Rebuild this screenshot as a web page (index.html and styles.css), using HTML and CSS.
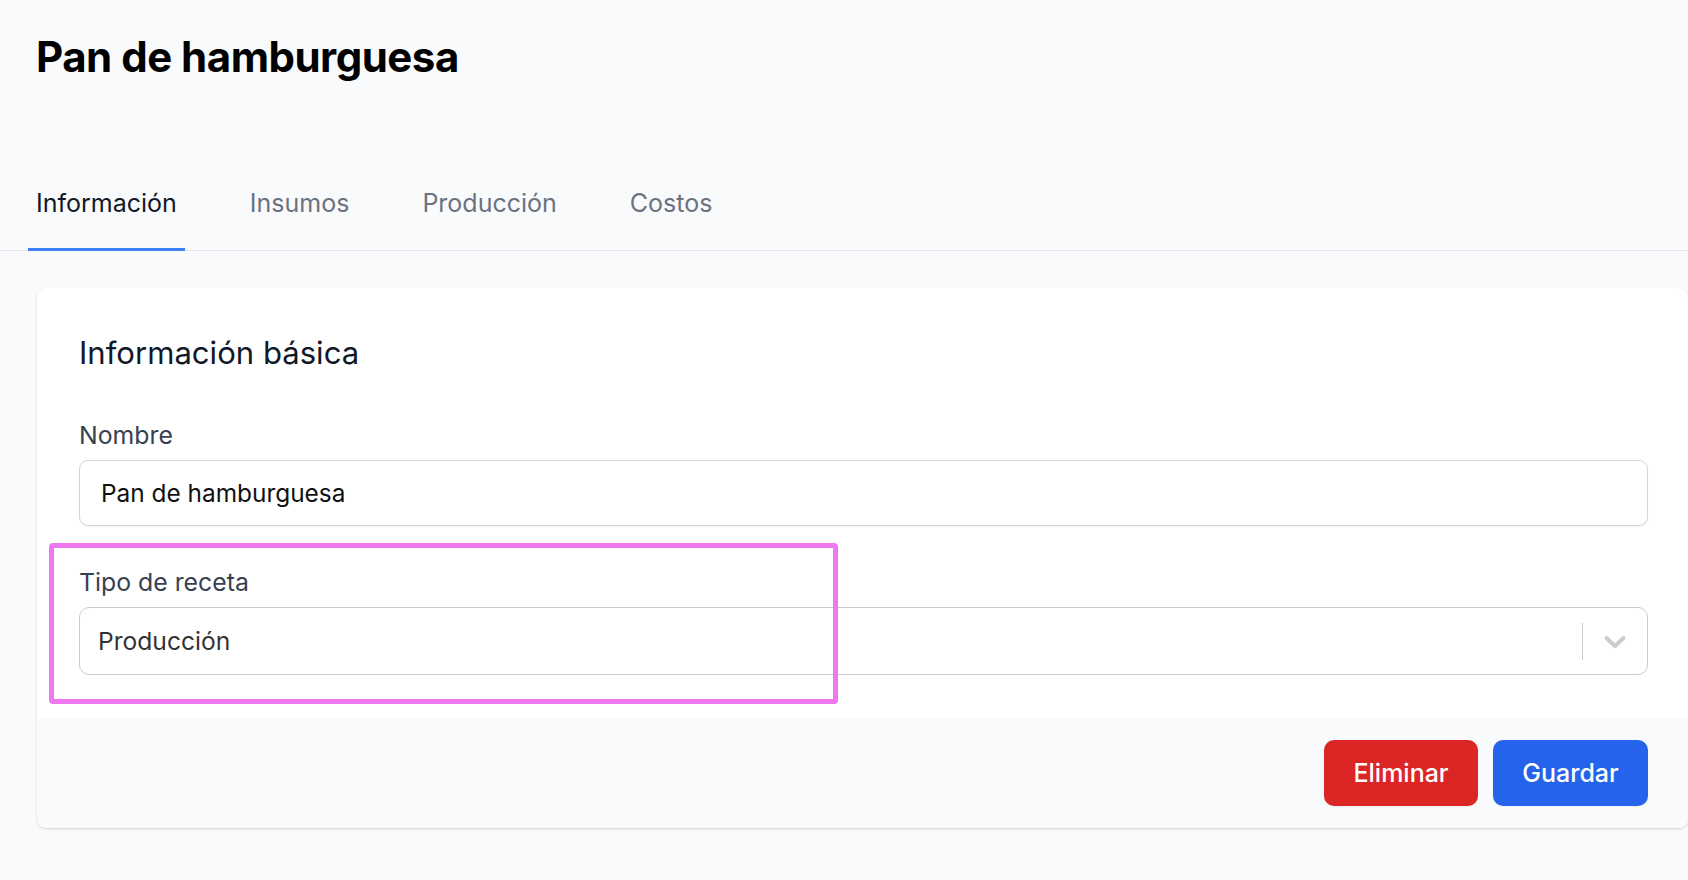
FILE: index.html
```html
<!DOCTYPE html>
<html lang="es">
<head>
<meta charset="utf-8">
<title>Pan de hamburguesa</title>
<link rel="stylesheet" href="styles.css">
</head>
<body>
  <h1 class="page-title">Pan de hamburguesa</h1>
  <nav class="tabs">
    <a class="tab tab-active">Información</a>
    <a class="tab">Insumos</a>
    <a class="tab">Producción</a>
    <a class="tab">Costos</a>
  </nav>
  <section class="card">
    <div class="card-body">
      <h2 class="card-title">Información básica</h2>
      <div class="field field-name">
        <label class="label">Nombre</label>
        <div class="text-input">Pan de hamburguesa</div>
      </div>
      <div class="field field-type">
        <div class="highlight"></div>
        <label class="label">Tipo de receta</label>
        <div class="select">
          <div class="select-value">Producción</div>
          <span class="select-sep"></span>
          <span class="select-indicator">
            <svg class="chevron" viewBox="0 0 20 20" width="36" height="36" aria-hidden="true"><path d="M4.516 7.548c0.436-0.446 1.043-0.481 1.576 0l3.908 3.747 3.908-3.747c0.533-0.481 1.141-0.446 1.574 0 0.436 0.445 0.408 1.197 0 1.615-0.406 0.418-4.695 4.502-4.695 4.502-0.217 0.223-0.502 0.335-0.787 0.335s-0.57-0.112-0.789-0.335c0 0-4.287-4.084-4.695-4.502s-0.436-1.170 0-1.615z"/></svg>
          </span>
        </div>
      </div>
    </div>
    <div class="card-footer">
      <button class="btn btn-danger">Eliminar</button>
      <button class="btn btn-primary">Guardar</button>
    </div>
  </section>
</body>
</html>
```

FILE: styles.css
```css
html, body {
  margin: 0;
  padding: 0;
}
body {
  background: #f9fafb;
  font-family: Inter, "Noto Sans", sans-serif;
  width: 1688px;
  height: 880px;
  overflow: hidden;
}
.page-title {
  margin: 32px 0 0 36px;
  font-size: 42px;
  line-height: 50px;
  font-weight: 700;
  letter-spacing: -0.5px;
  color: #000;
}
.tabs {
  display: flex;
  gap: 57px;
  margin-top: 106px;
  padding-left: 28px;
  border-bottom: 1px solid #e5e7eb;
}
.tab {
  display: block;
  padding: 0 8px 30px;
  margin-bottom: -1px;
  border-bottom: 3px solid transparent;
  font-size: 25px;
  line-height: 30px;
  font-weight: 400;
  color: #6b7280;
}
.tab-active {
  color: #111827;
  border-bottom-color: #3b82f6;
}
.card {
  margin: 37px 0 0 37px;
  background: #fff;
  border-radius: 9px;
  box-shadow: 0 1px 3px rgba(0,0,0,0.10), 0 1px 2px rgba(0,0,0,0.06);
}
.card-body {
  padding: 46px 40px 43px 42px;
}
.card-title {
  margin: 0;
  font-size: 31.1px;
  line-height: 38px;
  font-weight: 400;
  color: #111827;
}
.field {
  position: relative;
  display: flex;
  flex-direction: column;
}
.field-name {
  margin-top: 48px;
}
.field-type {
  margin-top: 41px;
}
.label {
  font-size: 24.8px;
  line-height: 30px;
  font-weight: 400;
  color: #374151;
  margin-bottom: 10px;
}
.text-input {
  box-sizing: border-box;
  height: 66px;
  border: 1px solid #d1d5db;
  border-radius: 9px;
  padding: 0 21px;
  display: flex;
  align-items: center;
  font-size: 24.4px;
  color: #111;
  background: #fff;
  box-shadow: 0 1px 2px rgba(0,0,0,0.04);
}
.select {
  box-sizing: border-box;
  height: 68px;
  border: 1px solid #cccccc;
  border-radius: 10px;
  display: flex;
  align-items: center;
  background: #fff;
}
.select-value {
  flex: 1;
  padding-left: 18px;
  font-size: 24.6px;
  color: #333333;
}
.select-sep {
  width: 1px;
  height: 37px;
  background: #cccccc;
}
.select-indicator {
  display: flex;
  padding: 0 14px;
}
.chevron {
  fill: #cccccc;
  display: block;
}
.highlight {
  position: absolute;
  left: -30px;
  top: -24px;
  width: 789px;
  height: 161px;
  box-sizing: border-box;
  border: 5.5px solid #ef77ef;
  border-radius: 4px;
  pointer-events: none;
}
.card-footer {
  display: flex;
  justify-content: flex-end;
  gap: 15px;
  padding: 22px 40px;
  background: #f9fafb;
  border-radius: 0 0 9px 9px;
}
.btn {
  height: 66px;
  border: none;
  border-radius: 10px;
  padding: 0;
  font-family: Inter, "Noto Sans", sans-serif;
  font-size: 25px;
  font-weight: 500;
  color: #fff;
  box-shadow: 0 1px 2px rgba(0,0,0,0.05);
}
.btn-danger {
  background: #dc2626;
  width: 154px;
}
.btn-primary {
  background: #2563eb;
  width: 155px;
}
```
